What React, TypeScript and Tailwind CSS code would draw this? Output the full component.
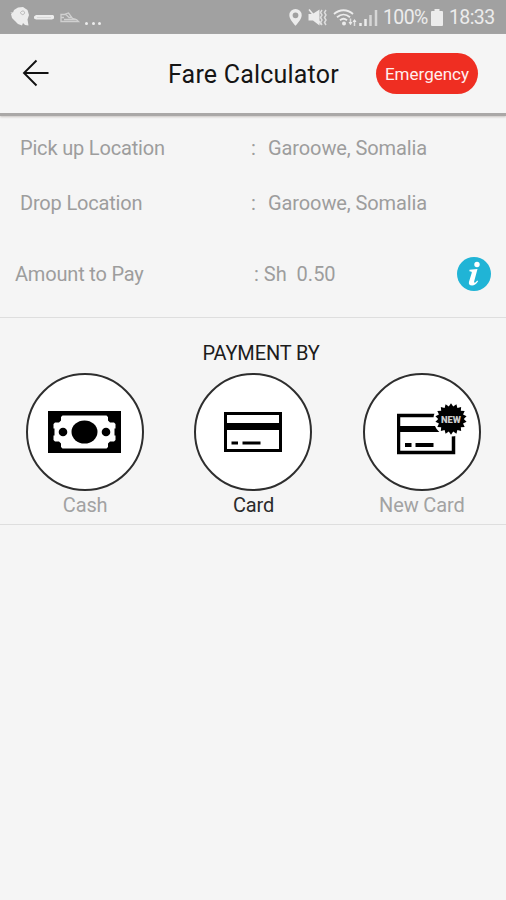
import type { ReactNode } from 'react';

interface TripRowProps {
  label: string;
  value: string;
  className: string;
}

interface PaymentOptionProps {
  label: string;
  active?: boolean;
  children: ReactNode;
}

// Alternating outer / inner radius points for the "NEW" seal
const sealPoints = Array.from({ length: 36 }, (_, i) => {
  const radius = i % 2 === 0 ? 15.8 : 12.8;
  const angle = (i * Math.PI) / 18 - Math.PI / 2;
  return `${(54 + radius * Math.cos(angle)).toFixed(2)},${(16 + radius * Math.sin(angle)).toFixed(2)}`;
}).join(' ');

function StatusBar() {
  return (
    <div className="flex h-[34px] shrink-0 items-center bg-[#a1a1a1] text-[#ececec]">
      <svg className="ml-[9px] h-[34px] w-[24px]" viewBox="0 0 24 34" fill="currentColor">
        <path d="M1 12l3 .500 1-2.500 4-2.500 5-.5 4.500 3 1.500 5-1.500 4.500 1 6-3.500-.5-2-2-1 2.500-4-1.500-3-3-3-3-1-4 1-1z" />
        <path d="M11.500 12.500c1.500-2.500 4.500-1.500 4 .5s-3 2.500-4-.5z" stroke="#b5b5b5" strokeWidth="1" fill="none" />
      </svg>
      <svg className="ml-px h-[34px] w-[22px]" viewBox="0 0 22 34" fill="currentColor">
        <path d="M0 16.500l2-1.500h17l1 1v2.500l-2 1H2l-2-1z" />
        <path d="M3 17.500h14" stroke="#d8d8d8" />
      </svg>
      <svg className="ml-[3px] h-[34px] w-[22px]" viewBox="0 0 22 34" fill="none" stroke="#d0d0d0" strokeWidth="1.300">
        <path d="M7 14.500H2v3h3M2 17.500v4h17.500l-2-2-4-1-4-5.500-3 1 3.500 3.500h3M5 19.500h12" />
      </svg>
      <span className="ml-[4px] flex gap-[3.500px] pt-[13px]">
        <i className="size-[3px] rounded-full bg-current" />
        <i className="size-[3px] rounded-full bg-current" />
        <i className="size-[3px] rounded-full bg-current" />
      </span>
      <svg className="ml-auto h-[34px] w-[96px]" viewBox="0 0 96 34">
        {/* location pin */}
        <path
          fill="currentColor"
          fillRule="evenodd"
          d="M10.500 9a6.200 6.200 0 0 0-6.200 6.200c0 4.300 6.200 10.500 6.200 10.500s6.200-6.200 6.200-10.500A6.200 6.200 0 0 0 10.500 9zm0 3.400a2.900 2.900 0 1 1 0 5.800 2.900 2.900 0 0 1 0-5.800z"
        />
        {/* vibrate / muted speaker */}
        <path fill="currentColor" d="M23.500 14h4l7-4.500v16L28 20.500h-4.500z" />
        <path d="M24 9.500l12.500 15" stroke="currentColor" strokeWidth="1.500" />
        <path
          d="M37 10l-1.500 2.500 1.500 2.500-1.500 2.500 1.500 2.500-1.500 2.500 1.500 2.500M41 10l-1.500 2.500 1.500 2.500-1.500 2.500 1.500 2.500-1.500 2.500 1.500 2.500"
          fill="none"
          stroke="#dedede"
          strokeWidth="1.500"
        />
        {/* wifi */}
        <g fill="none" stroke="currentColor" strokeWidth="1.800">
          <path d="M49 14c5.500-5 13.500-5 19 0M52 17.200c4-3.500 9-3.500 13 0M55 20.300c2.300-2 4.700-2 7 0" />
        </g>
        <circle cx="59" cy="23.500" r="2" fill="currentColor" />
        <path d="M65.500 18.500v6M69.500 20v6" stroke="#dedede" strokeWidth="1.500" />
        <path d="M63.500 22l2 3 2-3zM67.500 22l2-3 2 3z" fill="currentColor" />
        {/* signal */}
        <path d="M75.500 23v3M80.500 19v7" stroke="currentColor" strokeWidth="2.500" />
        <path d="M85.500 15v11M91 10v16" stroke="#d6d6d6" strokeWidth="2.500" />
      </svg>
      <span className="ml-[2px] w-[44px] whitespace-nowrap pt-px text-[19.500px] leading-[34px] tracking-[-0.600px]">100%</span>
      <svg className="ml-[4px] h-[34px] w-[12px]" viewBox="0 0 12 34" fill="currentColor">
        <path d="M3.500 9h5v2H11a1 1 0 0 1 1 1v13a1 1 0 0 1-1 1H1a1 1 0 0 1-1-1V12a1 1 0 0 1 1-1h2.500z" />
      </svg>
      <span className="mr-[11px] ml-[6px] w-[46px] whitespace-nowrap pt-px text-[19.500px] leading-[34px] tracking-[-0.600px]">18:33</span>
    </div>
  );
}

function Header() {
  return (
    <header className="flex h-[82px] shrink-0 items-center border-b-[3px] border-[#aaa8a7] bg-[#f5f5f5] shadow-[0_1px_2px_#c9c5c2]">
      <svg className="mb-px ml-[22px] h-[28px] w-[27px]" viewBox="0 0 27 28" fill="none" stroke="#111" strokeWidth="1.900">
        <path d="M14.500 1.500L2 14l12.500 12.500M2 14h24.500" />
      </svg>
      <h1 className="ml-[119px] w-[208px] whitespace-nowrap pt-[3px] text-[25px] leading-[30px] tracking-[0.200px] text-[#151515]">
        Fare Calculator
      </h1>
      <button className="h-[41px] w-[102px] rounded-full bg-[#ef2e22] pt-[2px] text-[17px] text-[#fff0ee]">
        Emergency
      </button>
    </header>
  );
}

function TripRow({ label, value, className }: TripRowProps) {
  return (
    <div className={`flex whitespace-pre text-[20px] leading-[24px] text-[#9d9d9d] ${className}`}>
      <span className="w-[231px] tracking-[-0.180px]">{label}</span>
      <span className="w-[17px]">:</span>
      <span className="tracking-[-0.100px]">{value}</span>
    </div>
  );
}

function PaymentOption({ label, active = false, children }: PaymentOptionProps) {
  return (
    <div className="flex flex-col items-center">
      <div className="flex size-[118px] items-center justify-center rounded-full border-2 border-[#2e2e2e] bg-white">
        {children}
      </div>
      <span className={`mt-[2px] text-[20px] leading-[24px] tracking-[-0.150px] ${active ? 'text-[#2b2b2b]' : 'text-[#a2a2a2]'}`}>
        {label}
      </span>
    </div>
  );
}

export default function App() {
  return (
    <div className="flex h-[900px] w-[506px] flex-col overflow-hidden bg-[#f5f5f5] font-['Roboto',sans-serif]">
      <StatusBar />
      <Header />

      <section className="flex h-[202px] shrink-0 flex-col border-b border-[#dedede]">
        <TripRow label="Pick up Location" value="Garoowe, Somalia" className="mt-[20px] ml-[20px]" />
        <TripRow label="Drop Location" value="Garoowe, Somalia" className="mt-[31px] ml-[20px]" />
        <div className="mt-[40px] flex items-center text-[20px] text-[#9d9d9d]">
          <span className="ml-[15px] w-[238px] pt-px leading-[36px] tracking-[-0.180px]">Amount to Pay</span>
          <span className="ml-px whitespace-pre pt-px">: Sh  0.50</span>
          <svg className="mr-[15px] ml-auto size-[34px]" viewBox="0 0 34 34">
            <circle cx="17" cy="17" r="17" fill="#20b4d6" />
            <circle cx="20" cy="7.500" r="2.700" fill="#fff" />
            <path
              d="M12.500 12.800l8-.7-3.300 12.200c-.4 1.600.5 1.800 1.500 1l1.500-1.700.9.700c-2 3-4 4.200-6 4.200-2.700 0-3.700-1.500-3.100-3.700l2.700-8.900c.3-1.200 0-1.600-2.300-1.700z"
              fill="#fff"
            />
          </svg>
        </div>
      </section>

      <section className="flex h-[207px] shrink-0 flex-col border-b border-[#dedede]">
        <h2 className="mt-[23px] ml-[16px] text-center text-[20px] leading-[24px] tracking-[-0.150px] text-[#1c1c1c]">PAYMENT BY</h2>
        <div className="mt-[8px] ml-px grid grid-cols-3">
          <PaymentOption label="Cash">
            <svg className="mr-px h-[42px] w-[73px]" viewBox="0 0 73 42">
              <path d="M0 0h73v42H0z" />
              <path
                d="M14.500 4.500h44l1.500 1.500v3.500l2 2h4l1.500 1.500v4.500h-1v7h1V29L66 30.500h-4l-2 2V36l-1.500 1.500h-44L13 36v-3.500l-2-2H7L5.500 29v-4.500h1v-7h-1V13L7 11.500h4l2-2V6z"
                fill="#fff"
              />
              <ellipse cx="36.500" cy="21" rx="13" ry="11.500" />
              <circle cx="15" cy="21" r="4.300" />
              <circle cx="58" cy="21" r="4.300" />
            </svg>
          </PaymentOption>
          <PaymentOption label="Card" active>
            <svg className="h-[40px] w-[58px]" viewBox="0 0 58 40">
              <path d="M1.500 1.500h55v37h-55z" fill="none" stroke="#000" strokeWidth="3" />
              <path d="M0 11h58v7H0zM7.500 29.500H14v3H7.500zM18.500 29.500H36.500v3H18.500z" />
            </svg>
          </PaymentOption>
          <PaymentOption label="New Card">
            <svg className="mb-[6px] ml-[20px] h-[52px] w-[70px]" viewBox="0 0 70 52">
              <path d="M56.500 22v27.500h-55v-37h55" fill="none" stroke="#000" strokeWidth="3.500" />
              <path d="M0 23h52v6H0zM8 40h6.500v4H8zM18.500 40H36.500v4H18.500z" />
              <circle cx="54" cy="16" r="17.500" fill="#fff" />
              <polygon points={sealPoints} />
              <text
                x="54"
                y="19.500"
                textAnchor="middle"
                fill="#ccc"
                fontSize="9"
                fontWeight="900"
                textLength="20"
                lengthAdjust="spacingAndGlyphs"
              >
                NEW
              </text>
            </svg>
          </PaymentOption>
        </div>
      </section>
    </div>
  );
}
